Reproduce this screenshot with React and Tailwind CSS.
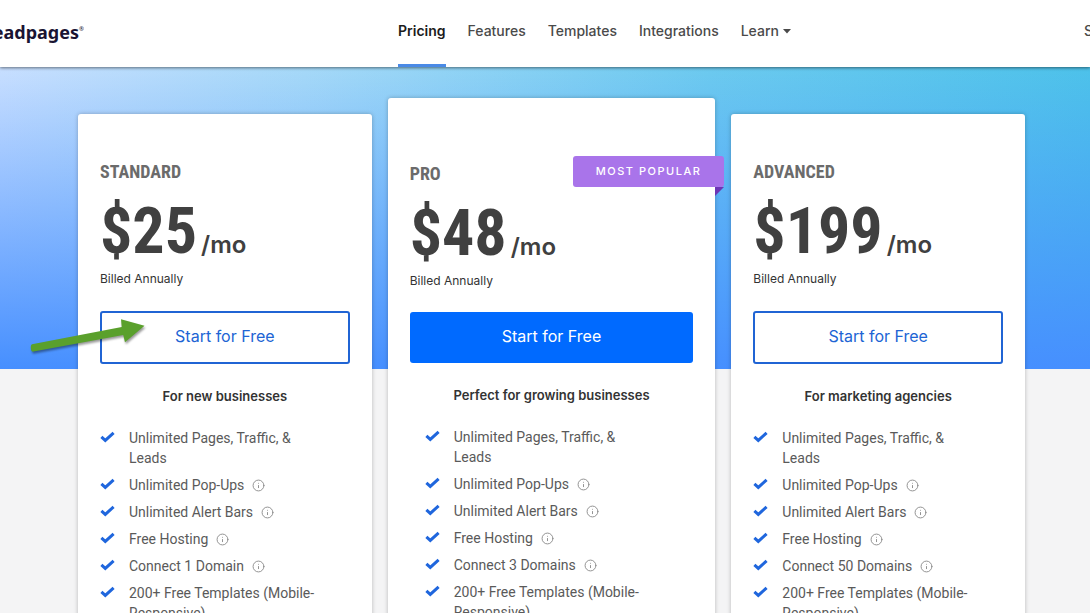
import { Info } from 'lucide-react'

const NAV = ['Pricing', 'Features', 'Templates', 'Integrations']

const PLANS = [
  {
    name: 'STANDARD',
    price: '$25',
    audience: 'For new businesses',
    domains: 'Connect 1 Domain',
  },
  {
    name: 'PRO',
    price: '$48',
    audience: 'Perfect for growing businesses',
    domains: 'Connect 3 Domains',
    popular: true,
  },
  {
    name: 'ADVANCED',
    price: '$199',
    audience: 'For marketing agencies',
    domains: 'Connect 50 Domains',
  },
]

function Header() {
  return (
    <header className="relative z-10 flex h-[67px] overflow-hidden bg-white shadow-[0_1px_3px_rgba(0,0,0,0.5)]">
      <a
        href="#home"
        className="flex w-[84px] shrink-0 items-start justify-end overflow-hidden pt-[17px] font-['Noto_Sans'] text-lg leading-[30px] font-bold text-[#1a1433]"
      >
        Leadpages
        <span className="pt-0.5 text-[6px] leading-[20px] font-normal">®</span>
      </a>
      <nav className="ml-[314px] flex gap-[22px] text-sm font-medium text-[#4a4a4a]">
        {NAV.map((label, i) => (
          <a
            key={label}
            href={`#${label.toLowerCase()}`}
            className={
              i === 0
                ? 'border-b-[3px] border-[#4a8ae6] pt-[21px] leading-5 font-semibold text-[#1c1c1c]'
                : 'pt-[21px] leading-5'
            }
          >
            {label}
          </a>
        ))}
        <button type="button" className="flex h-[41px] items-center gap-1 pt-[21px] leading-5">
          Learn
          <svg width="8" height="5" viewBox="0 0 8 5" fill="currentColor" aria-hidden="true">
            <path d="M0 0h8L4 4.5z" />
          </svg>
        </button>
      </nav>
      <a
        href="#account"
        className="ml-auto w-[6px] shrink-0 overflow-hidden pt-[21px] text-sm leading-5 font-medium text-[#4a4a4a]"
      >
        S
      </a>
    </header>
  )
}

function Feature({ children, info }) {
  return (
    <li className="flex gap-[14px]">
      <svg className="mt-[3px] shrink-0" width="15" height="12" viewBox="0 0 15 12" fill="none" aria-hidden="true">
        <path d="M1.4 5.8 5.3 9.4 13.6 1.8" stroke="#1f66dd" strokeWidth="3" />
      </svg>
      <span>
        {children}
        {info && <Info className="ml-2 inline-block align-[-2px] text-[#8a8a8a]" size={13} strokeWidth={1.7} />}
      </span>
    </li>
  )
}

function PlanCard({ plan }) {
  const { name, price, audience, domains, popular } = plan
  return (
    <section
      className={
        popular
          ? 'relative rounded-t-[3px] bg-white px-[22px] pt-16 shadow-[0_0_4px_rgba(0,0,0,0.25)]'
          : 'mt-4 rounded-t-[3px] bg-white px-[22px] pt-[46px] shadow-[0_0_4px_rgba(0,0,0,0.25)]'
      }
    >
      {popular && (
        <div className="absolute top-[58px] -right-[9px]">
          <div className="rounded-[3px] bg-[#a974ea] px-[23px] text-[11px] leading-[31px] font-medium tracking-[1.5px] text-white">
            MOST POPULAR
          </div>
          <svg className="ml-auto block" width="9" height="9" viewBox="0 0 9 9" aria-hidden="true">
            <path d="M0 0h9L0 9z" fill="#6d35b5" />
          </svg>
        </div>
      )}
      <h2 className="font-['Roboto_Condensed','Roboto',sans-serif] text-lg leading-6 font-bold text-[#6b6b6b]">
        {name}
      </h2>
      <p className="mt-3 flex items-baseline gap-1 text-[#404040]">
        <span className="font-['Roboto_Condensed','Roboto',sans-serif] text-[64px] leading-[72px] font-bold">
          {price}
        </span>
        <span className="text-2xl font-semibold">/mo</span>
      </p>
      <p className="mt-px text-xs leading-5 text-[#333]">Billed Annually</p>
      <button
        type="button"
        className={
          popular
            ? 'mt-[21px] h-[51px] w-full rounded-[3px] bg-[#006aff] pb-1 text-base text-white'
            : 'mt-[22px] h-[53px] w-full rounded-[3px] border-2 border-[#2064d4] bg-white pb-1 text-base text-[#2064d4]'
        }
      >
        Start for Free
      </button>
      <h3 className="mt-[22px] text-center text-[13px] leading-5 font-semibold text-[#333]">{audience}</h3>
      <ul
        className={
          popular
            ? "mx-[15px] mt-[22px] flex flex-col gap-[7px] pr-7 pb-8 font-['Roboto'] text-sm leading-5 text-[#5a5a5a]"
            : "mt-[22px] flex flex-col gap-[7px] pr-7 pb-8 font-['Roboto'] text-sm leading-5 text-[#5a5a5a]"
        }
      >
        <Feature>Unlimited Pages, Traffic, &amp; Leads</Feature>
        <Feature info>Unlimited Pop-Ups</Feature>
        <Feature info>Unlimited Alert Bars</Feature>
        <Feature info>Free Hosting</Feature>
        <Feature info>{domains}</Feature>
        <Feature>200+ Free Templates (Mobile-Responsive)</Feature>
      </ul>
    </section>
  )
}

// Green pointer laid over the first plan's button
function Pointer() {
  return (
    <svg
      className="absolute top-[311px] left-[25px] drop-shadow-[1px_2px_1px_rgba(0,0,0,0.4)]"
      width="125"
      height="48"
      viewBox="25 311 125 48"
      aria-hidden="true"
    >
      <path
        d="M32 344.2 121.7 327 121 319.3 144.5 325.7 125 342.3 123.2 335 33.5 351.6Q31 352 30.8 348 30.6 344.6 32 344.2z"
        fill="#5aa02c"
      />
    </svg>
  )
}

export default function App() {
  return (
    <div className="relative h-screen overflow-hidden bg-[#f4f4f5] font-['Inter',sans-serif]">
      <Header />
      <main className="bg-[linear-gradient(to_bottom,transparent,#468fff),linear-gradient(to_right,#c8dfff,#a6d9f8_28%,#6ccaef_65%,#4dc2ea)] bg-[length:100%_302px] bg-no-repeat pt-[31px] pr-[65px] pl-[78px]">
        <div className="grid grid-cols-[294fr_328fr_294fr] gap-4">
          {PLANS.map((plan) => (
            <PlanCard key={plan.name} plan={plan} />
          ))}
        </div>
      </main>
      <Pointer />
    </div>
  )
}
